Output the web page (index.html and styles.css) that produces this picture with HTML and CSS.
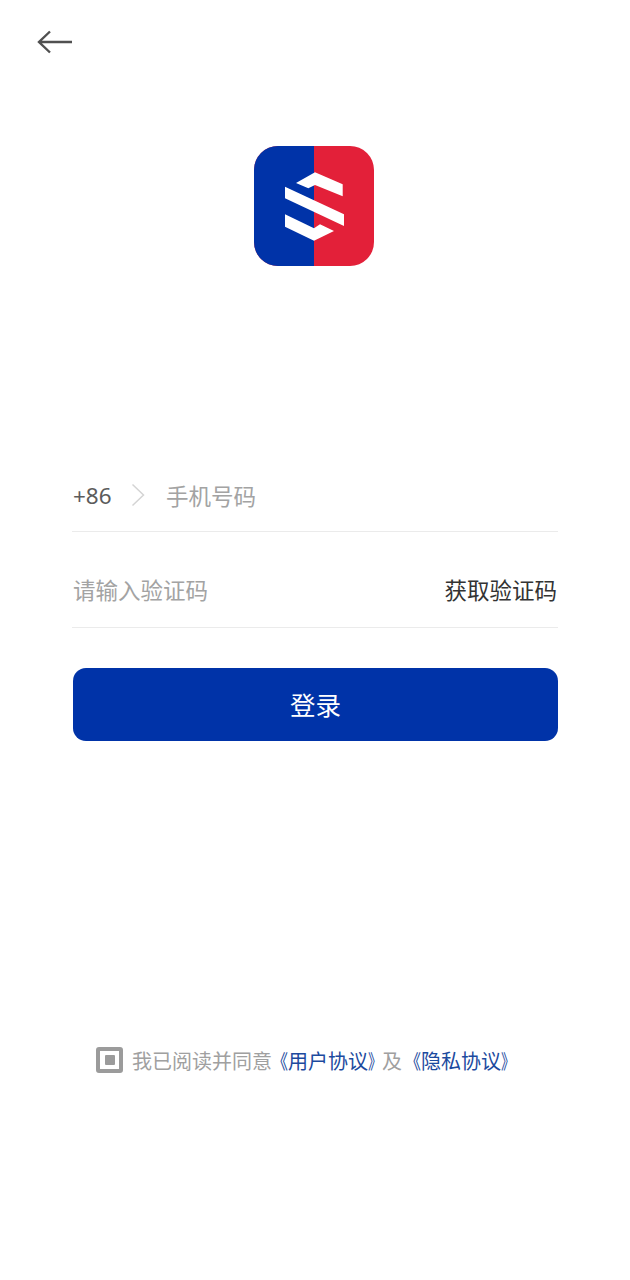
FILE: index.html
```html
<!DOCTYPE html>
<html lang="zh-CN">
<head>
<meta charset="utf-8">
<title>登录</title>
<link rel="stylesheet" href="styles.css">
</head>
<body>
<main class="page">
  <button class="back" aria-label="返回">
    <svg width="36" height="24" viewBox="0 0 36 24"><path d="M35 12H2M13 1.500 2 12l11 10.500" fill="none" stroke="#505050" stroke-width="2.400"/></svg>
  </button>
  <div class="logo">
    <svg width="120" height="120" viewBox="0 0 120 120">
      <rect x="0" y="0" width="120" height="120" rx="24" fill="#e32039"/>
      <path d="M24 0H60V120H24A24 24 0 0 1 0 96V24A24 24 0 0 1 24 0Z" fill="#0033a8"/>
      <path d="M42 37 61 26.300 88.700 38.300V50.300L61 39 54.300 42.300ZM31 40.700 90 68.300V80L31 52.300ZM31 68.300 60 82.300 66 78.300 80 85 60 94.700 31 80.700Z" fill="#fff"/>
    </svg>
  </div>
  <form class="form">
    <div class="row phone-row">
      <span class="code">+86</span>
      <svg class="chev" width="14" height="24" viewBox="0 0 14 24"><path d="M1.500 1.500 12.500 12 1.500 22.500" fill="none" stroke="#d4d4d4" stroke-width="1.500"/></svg>
      <span class="hint">手机号码</span>
    </div>
    <div class="row code-row">
      <span class="hint">请输入验证码</span>
      <span class="get">获取验证码</span>
    </div>
    <button type="button" class="login">登录</button>
  </form>
  <div class="agree">
    <span class="check"><span class="dot"></span></span>
    <span class="agree-text">我已阅读并同意<a class="link"><span class="open">《</span>用户协议<span class="close">》</span></a>及<a class="link"><span class="open open-gap">《</span>隐私协议<span class="close">》</span></a></span>
  </div>
</main>
</body>
</html>
```
FILE: styles.css
```css
* { box-sizing: border-box; }
html, body { margin: 0; padding: 0; background: #fff; }
body { font-family: "Noto Sans CJK SC", "Noto Sans", sans-serif; }
.page { width: 630px; height: 1280px; overflow: hidden; display: flex; flex-direction: column; }
.back { display: block; width: 36px; height: 24px; margin: 30px 0 0 37px; padding: 0; border: 0; background: none; }
.back svg { display: block; }
.logo { width: 120px; height: 120px; margin: 92px 0 0 254px; }
.logo svg { display: block; }
.form { width: 486px; margin: 200px 0 0 72px; display: flex; flex-direction: column; }
.row { height: 96px; display: flex; align-items: center; border-bottom: 1px solid #ebebeb; font-size: 22.500px; padding-left: 1px; }
.phone-row { height: 66px; padding-bottom: 7px; }
.code-row { padding-top: 19px; justify-content: space-between; padding-right: 1px; }
.code { color: #5c5c5c; font-family: "Noto Sans", sans-serif; font-size: 22.500px; width: 58px; }
.chev { margin-right: 21px; }
.hint { color: #a3a3a3; }
.get { color: #333; }
.login { width: 485px; height: 73px; margin: 40px 0 0 1px; border: 0; border-radius: 13px; background: #0033a8; color: #fff; font: inherit; font-size: 25.500px; padding: 0 0 2px; }
.agree { display: flex; align-items: center; margin: 305px 0 0 96px; height: 28px; }
.check { width: 27px; height: 26px; border: 4px solid #9b9b9b; border-radius: 3px; display: flex; align-items: center; justify-content: center; margin-right: 9px; }
.dot { width: 10px; height: 10px; background: #9b9b9b; border-radius: 1px; }
.agree-text { color: #a0a0a0; font-size: 20px; white-space: nowrap; }
.link { color: #1c4a9e; }
.open { display: inline-block; transform: scaleX(0.8); transform-origin: left center; margin-right: -4px; }
.open-gap { margin-left: 3px; }
.close { display: inline-block; transform: scaleX(0.7); transform-origin: left center; margin-right: -6px; }
```
